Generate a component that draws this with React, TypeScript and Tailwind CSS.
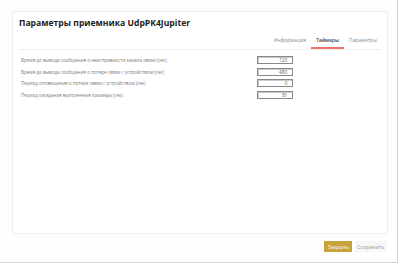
export default function App() {
  const rows = [
    { label: 'Время до вывода сообщения о неисправности канала связи (сек)', value: '120' },
    { label: 'Время до вывода сообщения о потере связи с устройством (сек)', value: '480' },
    { label: 'Период оповещения о потере связи с устройством (сек)', value: '0' },
    { label: 'Период ожидания выполнения команды (сек)', value: '30' },
  ];

  return (
    <div className="w-[400px] h-[264px] bg-white font-['Open_Sans',sans-serif]">
      <div className="w-[398px] h-[263px] bg-[#fefefe] border-r border-b border-[#d4d4d4] flex flex-col">
        {/* Panel */}
        <div className="ml-[12px] mt-[11px] w-[376px] h-[223px] border border-[#eeeeee] bg-white px-[6px]">
          <div className="h-[24px] pt-[5px] text-[8.6px] font-bold text-[#222] leading-[12px]">
            Параметры приемника UdpPK4Jupiter
          </div>

          {/* Tabs */}
          <div className="flex justify-end border-b border-[#eeeeee]">
            <div className="px-[4px] pb-[5px] text-[5px] leading-[8px] text-[#8a8a8a]">Информация</div>
            <div className="ml-[1px] px-[5px] pb-[3px] text-[5px] leading-[8px] font-semibold text-[#444] border-b-[2px] border-[#f07070]">
              Таймеры
            </div>
            <div className="ml-[1px] px-[4px] pb-[5px] text-[5px] leading-[8px] text-[#8a8a8a]">Параметры</div>
          </div>

          {/* Timers */}
          <div className="flex flex-col gap-[3.5px] pt-[6px] pl-[2px]">
            {rows.map((r) => (
              <div key={r.label} className="flex items-center h-[8px]">
                <div className="w-[236px] h-[8px] flex items-center">
                  <span className="whitespace-nowrap origin-left scale-[0.76] text-[6px] leading-none text-[#7a7a7a]">
                    {r.label}
                  </span>
                </div>
                <div className="w-[36px] h-[8px] border border-[#888] shadow-[inset_1px_1px_0_#ccc] bg-white flex items-center justify-end pr-[5px]">
                  <span className="origin-right scale-[0.8] text-[6px] leading-none text-[#666]">{r.value}</span>
                </div>
              </div>
            ))}
          </div>
        </div>

        {/* Footer */}
        <div className="flex justify-end gap-[3px] mt-[7px] mr-[11px]">
          <button className="h-[11px] w-[28px] bg-[#c9a23c] text-white text-[6px] flex items-center justify-center">
            <span className="scale-[0.85] leading-none">Закрыть</span>
          </button>
          <button className="h-[11px] w-[31px] bg-[#f6f6f6] text-[#9a9a9a] text-[6px] flex items-center justify-center">
            <span className="scale-[0.85] leading-none">Сохранить</span>
          </button>
        </div>
      </div>
    </div>
  );
}
